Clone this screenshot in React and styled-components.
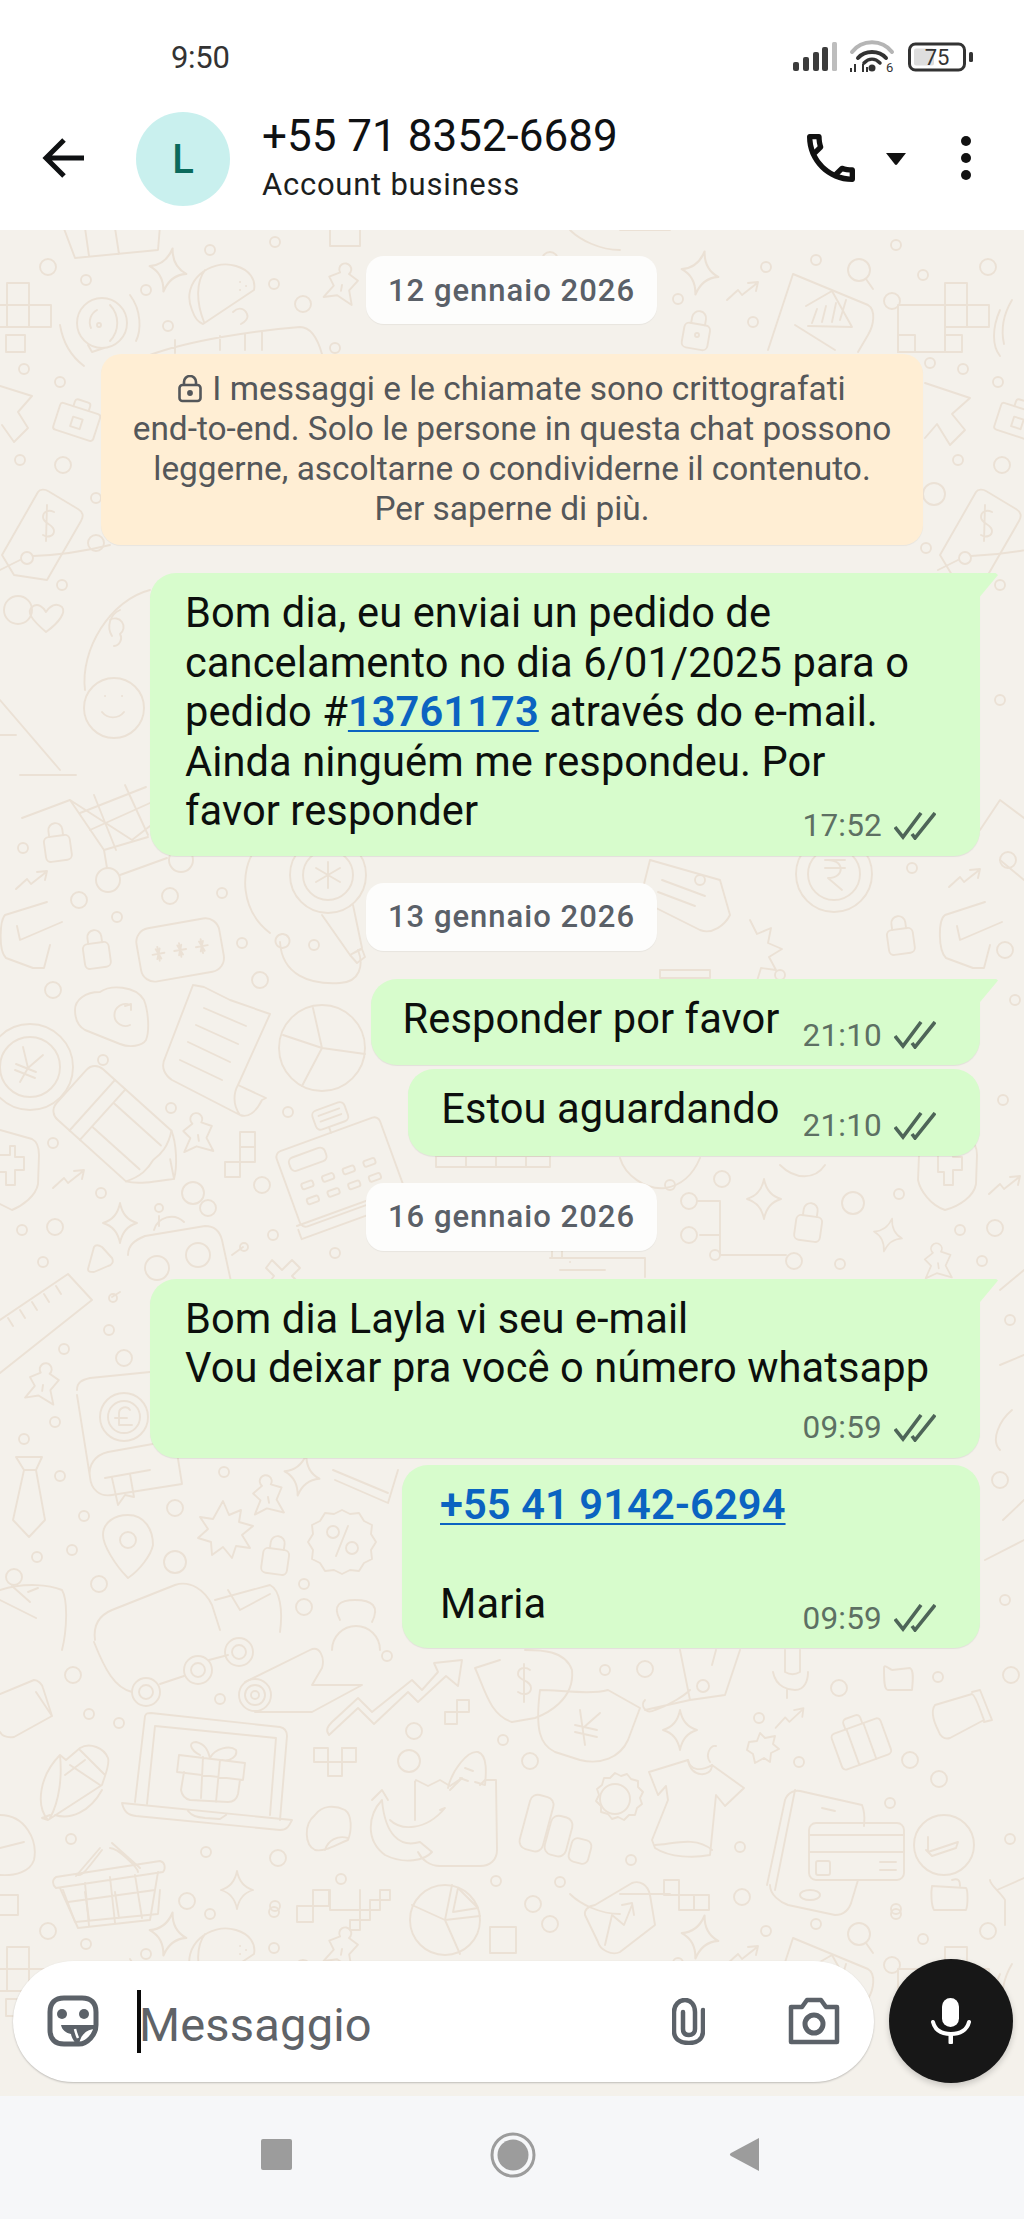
import React from 'react';
import styled, { createGlobalStyle } from 'styled-components';

const Global = createGlobalStyle`
  html, body { margin: 0; padding: 0; background: #fff; }
  * { box-sizing: border-box; }
`;

const Page = styled.div`
  width: 1024px; height: 2219px; display: flex; flex-direction: column;
  font-family: Roboto, "Liberation Sans", sans-serif; overflow: hidden; background: #fff;
`;
const StatusBar = styled.div`
  height: 80px; flex: none; display: flex; align-items: flex-start; justify-content: space-between;
  padding: 40px 50px 0 171px;
`;
const Clock = styled.span`font-size: 31px; line-height: 36px; color: #333; letter-spacing: -0.3px;`;
const StatusIcons = styled.svg`display: block; margin-top: 0; overflow: visible;`;
const Header = styled.header`
  height: 150px; flex: none; display: flex; align-items: center; padding: 0 0 0 42px; color: #0f1113;
`;
const BackIcon = styled.svg`flex: none; display: block; margin: 6px 52px 0 0;`;
const Avatar = styled.div`
  width: 94px; height: 94px; border-radius: 50%; background: #c9f0ee; color: #0b6a5c; flex: none;
  display: flex; align-items: center; justify-content: center; font-size: 40px; font-weight: 500; margin: 8px 32px 0 0;
`;
const Titles = styled.div`flex: 1; display: flex; flex-direction: column; gap: 5px; margin-top: 3px;`;
const Title = styled.div`font-size: 44px; line-height: 52px; letter-spacing: 0;`;
const Subtitle = styled.div`font-size: 31px; line-height: 36px; letter-spacing: 0.75px; color: #1c1e20;`;
const HeaderActions = styled.div`display: flex; align-items: center; margin: 6px 52px 0 0;`;
const ActionIcon = styled.svg`display: block; flex: none; margin-left: ${p => p.$ml || 0}px;`;

const Chat = styled.main`
  position: relative; flex: 1; display: flex; flex-direction: column; justify-content: space-between;
  background: #f4f1eb; overflow: hidden;
`;
const Wallpaper = styled.svg`position: absolute; left: 0; top: 0; display: block;`;
const Thread = styled.div`
  position: relative; display: flex; flex-direction: column; align-items: flex-end; padding: 26px 44px 0 0;
`;
const DateChip = styled.div`
  align-self: center; margin: ${p => p.$mt}px 0 0 -1px; width: 291px; height: 68px; border-radius: 18px; background: #fdfdfc;
  display: flex; align-items: center; justify-content: center; font-size: 31px; font-weight: 500; letter-spacing: 1px; color: #5a6068;
  transform: translateX(22px);
  box-shadow: 0 1px 1px rgba(0,0,0,.05);
`;
const Notice = styled.div`
  align-self: center; margin-top: 30px; width: 822px; height: 191px; border-radius: 20px; background: #ffeed4;
  padding-top: 15px; text-align: center; font-size: 33.4px; line-height: 40px; color: #54575a; transform: translateX(22px);
  box-shadow: 0 1px 1px rgba(0,0,0,.05);
`;
const NoticeLock = styled.svg`display: inline-block; vertical-align: -3px; margin-right: 10px;`;
const Bubble = styled.div`
  position: relative; width: ${p => p.$w}px; margin-top: ${p => p.$mt}px; padding: 15px 44px 12px ${p => p.$pl || 35}px;
  background: #d7fccc; border-radius: 26px;
  border-top-right-radius: ${p => p.$tail ? '3px' : '26px'};
  display: flex; flex-direction: ${p => p.$row ? 'row' : 'column'}; justify-content: flex-end;
  box-shadow: 0 1px 1px rgba(0,0,0,.07);
  ${p => p.$tail ? `&::after { content: ''; position: absolute; right: -18px; top: 0; width: 20px; height: 26px; background: #d7fccc;
    clip-path: polygon(0 0, 88% 0, 100% 8%, 0 100%); }` : ''}
`;
const Body = styled.div`
  font-size: 41.6px; line-height: 49.5px; color: #0c0f0d; white-space: nowrap; letter-spacing: 0.1px;
  ${p => p.$row ? 'margin-right: 23px; margin-bottom: 10px;' : ''}
`;
const Link = styled.span`color: #0b63c1; font-weight: 600; text-decoration: underline; text-decoration-thickness: 2px; text-underline-offset: 4px;`;
const Meta = styled.div`
  display: flex; align-items: center; justify-content: flex-end; gap: 12px; height: 36px; flex: none;
  margin-top: ${p => p.$mt || 0}px; align-self: flex-end;
  font-size: 31.5px; color: #5d7063; letter-spacing: 0.2px;
`;
const Ticks = styled.svg`display: block; flex: none;`;
const Composer = styled.div`
  position: relative; display: flex; align-items: center; gap: 15px; padding: 0 11px 13px 13px;
`;
const InputPill = styled.div`
  flex: 1; height: 121px; border-radius: 61px; background: #fff; display: flex; align-items: center; padding: 0 34px 0 34px;
  box-shadow: 0 1px 2px rgba(0,0,0,.22);
`;
const GrayIcon = styled.svg`display: block; flex: none; margin-left: ${p => p.$ml || 0}px;`;
const Caret = styled.span`width: 4px; height: 63px; background: #0a0a0a; margin-left: 38px; flex: none;`;
const Placeholder = styled.span`flex: 1; font-size: 47px; color: #5f6368; margin: 6px 0 0 -2px; letter-spacing: 0.2px;`;
const MicButton = styled.div`
  width: 124px; height: 124px; border-radius: 50%; background: #171717; flex: none; display: flex; align-items: center; justify-content: center;
  box-shadow: 0 3px 6px rgba(0,0,0,.18);
`;
const MicIcon = styled.svg`display: block;`;
const NavBar = styled.nav`
  height: 123px; flex: none; background: #f6f7f9; display: flex; align-items: center; padding: 0 0 6px 261px;
`;
const NavSquare = styled.span`width: 31px; height: 31px; background: #9c9c9c; border-radius: 2px; display: block;`;
const NavIcon = styled.svg`display: block; margin-left: ${p => p.$ml}px;`;

const At = ({ x, y, r = 0, s = 1, children }) => <g transform={`translate(${x} ${y}) rotate(${r}) scale(${s})`}>{children}</g>;
const Lock = p => <At {...p}><rect x="-13" y="-6" width="26" height="25" rx="5" /><path d="M-7 -6V-12a7 7 0 0 1 14 0V-6" /></At>;
const Sparkle = p => <At {...p}><path d="M0 -20Q3 -4 17 0Q3 4 0 20Q-3 4 -17 0Q-3 -4 0 -20Z" /></At>;
const Zig = p => <At {...p}><path d="M-16 9L-5 -1L-1 4L13 -7M5 -8L15 -9L13 0" /></At>;
const Apple = p => <At {...p}><path d="M-4 -12a6 6 0 1 1 9 0L15 -7L8 4L13 18L-3 11L-16 15L-8 2L-14 -6Z" /><path d="M0 0V6" /></At>;
const Cells = ({ x, y, c, r = 0, u = 22 }) => <At x={x} y={y} r={r}>{c.map(([a, b], i) => <rect key={i} x={a * u} y={b * u} width={u} height={u} />)}</At>;

const DOTS = [
  [73,1675,8],[220,1699,5],[89,1714,5],[119,1723,5],[387,1656,5],[414,1731,8],[503,1740,5],[409,1761,11],[71,1839,5],[206,1852,5],[278,1858,8],[187,1901,8],[274,1912,5],[341,1879,5],[496,1881,5],
  [605,1670,5],[645,1669,8],[839,1688,8],[938,1677,5],[1011,1675,8],[759,1718,5],[530,1761,8],[799,1762,5],[910,1760,8],[939,1779,8],[890,1803,5],[1010,1839,5],[740,1847,5],[631,1860,5],[560,1882,5],[742,1897,8],[533,1904,8],[896,1914,5],
  [24,369,5],[60,382,5],[20,460,5],[63,465,8],[96,498,5],[96,543,8],[62,585,5],[998,382,5],[930,363,5],[963,369,5],[958,460,5],[1002,465,8],[934,494,11],[926,548,5],[1000,585,5],
  [23,848,5],[79,900,8],[117,917,5],[170,896,8],[222,893,5],[242,943,5],[260,980,8],[314,945,5],[53,990,8],
  [103,1060,5],[171,1108,5],[288,1112,5],[53,1143,5],[101,1193,5],[193,1193,11],[262,1185,8],[208,1208,8],[22,1230,5],[55,1227,8],[273,1235,5],[43,1262,5],[335,1253,5],
  [109,1330,5],[64,1349,5],[124,1358,8],[55,1422,5],[24,1439,5],[60,1476,5],[224,1472,5],[84,1516,5],[72,1550,5],[37,1557,5],[175,1508,8],[175,1562,11],[99,1584,8],[304,1584,5],[304,1607,8],
  [722,1179,8],[853,1203,11],[899,1194,5],[995,1228,8],[960,1230,5],[840,1264,5],[982,1261,5],[689,1201,8],[689,1235,8],[794,1261,8],[670,1185,5],[715,1255,5],[1005,950,8],[780,975,5],[700,880,5],[912,868,5],[560,900,8],[1000,700,5],[1008,860,8],[1003,1100,5],[1010,1320,5],[1000,1480,8],[1005,1600,5],[1015,1000,5],
];
const TOP_DOTS = [[48,267,8],[86,280,5],[146,290,5],[210,250,5],[275,242,5],[274,284,5],[303,304,8],[168,326,5],[335,348,5],[896,245,5],[988,267,8],[923,275,5],[816,260,5],[766,267,5],[678,299,5],[892,301,8],[753,322,5],[597,305,5],[550,260,8]];

const TopBand = () => (
  <g>
    {TOP_DOTS.map(([x, y, r], i) => <circle key={i} cx={x} cy={y} r={r} />)}
    <path d="M63 226L75 258L158 250L160 226M85 228l4 28M115 228l4 26M330 226v20h30v-20" />
    <Sparkle x={168} y={270} r={12} s={1.1} />
    <path d="M192 310C180 282 210 258 236 266C250 270 256 280 254 290L203 324C197 322 194 316 192 310ZM205 270C196 282 196 302 204 322M240 282h.1M246 286h.1M240 290h.1" />
    <path d="M233 312c6-6 12-3 14 2c2 4-2 8-6 10" />
    <Cells x={7} y={283} c={[[0,0],[0,1],[1,1]]} />
    <rect x="6" y="335" width="19" height="17" />
    <path d="M0 305H7M0 327H7" />
    <circle cx="102" cy="323" r="25" />
    <path d="M88 345L92 352L104 348M110 305a26 26 0 0 1 0 36M97 310a14 14 0 0 0 -6 18M130 295c12 16 11 36 6 46M60 325c3 18 12 32 24 41" />
    <circle cx="99" cy="325" r="2" />
    <Apple x={342} y={285} r={10} />
    <path d="M150 355C190 340 260 330 300 327C312 327 318 340 322 354M175 353V340M220 350V336M245 350V334M262 350V332" />
    <Sparkle x={700} y={273} r={12} s={1.1} />
    <Zig x={743} y={291} s={1} />
    <Lock x={697} y={330} r={10} />
    <circle cx="697" cy="335" r="2" />
    <circle cx="859" cy="270" r="11" /><path d="M866 279L873 289" />
    <path d="M793 274L868 305C876 310 874 325 868 335L858 352M793 274L768 350" />
    <path d="M795 325L835 350M806 306L832 291L852 327L808 326M817 309L812 323M826 306L822 322M836 303L832 322M846 300L840 320" />
    <Cells x={945} y={283} c={[[0,0],[0,1],[1,1]]} u={22} />
    <rect x="898" y="305" width="47" height="47" /><rect x="898" y="335" width="17" height="17" /><rect x="945" y="335" width="17" height="17" />
    <path d="M1000 310c-8 18-8 36 0 46M1012 300c-6 10-12 26-8 44" />
    <path d="M570 230C580 240 600 250 620 250M620 230h50" />
  </g>
);

const Doodles = () => (
  <Wallpaper width="1024" height="1866" viewBox="0 230 1024 1866" fill="none" stroke="#ebe1d5" strokeWidth="1.9" strokeLinecap="round" strokeLinejoin="round">
    {DOTS.map(([x, y, r], i) => <circle key={i} cx={x} cy={y} r={r} />)}
    <TopBand />
    <g transform="translate(0 1664)"><TopBand /></g>

    <path d="M0 386L32 396L18 412L28 428L14 442L2 425" />
    <path d="M925 383L970 398L952 414L965 430L950 445L937 424L925 438" />
    <At x={77} y={421} r={18}><rect x="-21" y="-13" width="42" height="28" rx="3" /><path d="M-8 -13v-5a3 3 0 0 1 3-3h10a3 3 0 0 1 3 3v5" /><rect x="-5" y="-3" width="10" height="10" /></At>
    <At x={1018} y={421} r={18}><rect x="-21" y="-13" width="42" height="28" rx="3" /><path d="M-8 -13v-5a3 3 0 0 1 3-3h10a3 3 0 0 1 3 3v5" /><rect x="-5" y="-3" width="10" height="10" /></At>
    {[0, 938].map(dx => (
      <g key={dx} transform={`translate(${dx} 0)`}>
        <path d="M2 555L38 492C40 489 45 489 48 491L78 509C83 512 84 516 81 521L47 580L14 575Z" />
        <path d="M54 512c-6-3-11 0-11 5c0 7 11 7 11 14c0 5-6 7-11 4M47 505L46 541" />
        <circle cx="27" cy="558" r="6" />
        <path d="M0 570L20 560M33 556C60 555 90 550 110 545" />
      </g>
    ))}

    <path d="M46 632C32 620 26 612 32 607C38 602 44 608 46 612C50 606 56 602 62 607C66 612 60 622 46 632Z" />
    <circle cx="18" cy="610" r="14" />
    <path d="M85 690C80 650 110 600 150 590" />
    <circle cx="114" cy="708" r="30" /><path d="M102 712a14 14 0 0 0 22 0M105 696h.1M122 696h.1" />
    <path d="M120 610a18 18 0 0 0 -8 26M110 620a8 8 0 0 1 10 14a8 8 0 0 1 -6 12" />
    <path d="M0 700L60 770M20 775h56M0 735h16" />

    <path d="M22 818L70 800L132 840L150 826M70 800L104 850L148 837M80 813L146 787M90 830L150 803M94 795L116 850M125 785L148 835" />
    <path d="M104 850L107 868M120 875L167 858" />
    <circle cx="108" cy="880" r="12" />
    <circle cx="181" cy="860" r="12" />
    <Lock x={57} y={842} r={-8} />
    <Zig x={32} y={880} />
    <path d="M47 902L5 915C0 920 -2 950 6 958L33 968L44 968L50 945M62 922L20 940L17 926" />
    <Lock x={96} y={949} r={-8} />
    <At x={180} y={949} r={-10}><rect x="-42" y="-26" width="84" height="54" rx="14" /><path d="M-22 -6V8M-28 1H-16M-24 -4L-20 6M-20 -4L-24 6M0 -6V8M-6 1H6M-2 -4L2 6M2 -4L-2 6M22 -6V8M16 1H28M20 -4L24 6M24 -4L20 6" /></At>
    <path d="M270 933C240 910 240 870 255 850C262 840 280 835 290 830M282 934a7 7 0 1 0 1 0zM280 942C282 975 310 985 340 983C360 982 364 965 358 950" />
    <circle cx="328" cy="875" r="38" /><circle cx="328" cy="875" r="25" />
    <path d="M328 862V888M316 868L340 882M340 868L316 882" />
    <path d="M322 915L350 955L362 948L353 905M350 955l12 -6l3 8l-8 6z" />

    <circle cx="30" cy="1067" r="43" /><circle cx="30" cy="1067" r="30" />
    <path d="M23 1047L28 1068L20 1082M43 1055L28 1068M16 1064L36 1072M15 1070L35 1078" />
    <path d="M75 1010C75 1000 85 992 100 992C110 985 135 985 144 1000C148 1010 150 1030 146 1040C142 1046 130 1048 120 1044L85 1030C78 1026 75 1018 75 1010Z" />
    <path d="M130 1005a11 11 0 1 0 0 20M125 1006l6 -2l0 6" />
    <path d="M193 985L165 1058C160 1068 166 1076 172 1080L240 1115C248 1118 256 1112 262 1100L266 1098L238 1085C234 1092 232 1104 240 1115M193 985L204 987L230 1000L270 1014L238 1085" />
    <path d="M204 1008L246 1026M196 1025L238 1044M188 1042L230 1062M180 1060L222 1080" />
    <circle cx="322" cy="1048" r="43" /><path d="M313 1008L322 1048L365 1054M322 1048L302 1086M322 1048L283 1035" />

    <At x={122} y={1132} r={42}>
      <path d="M-68 -22C-68 -30 -62 -34 -56 -34L36 -34C48 -28 64 -12 70 0C60 12 48 28 36 34L-56 34C-62 34 -68 30 -68 22Z" />
      <path d="M-40 -34V34M-26 -34V34M-26 -16H38M-26 16H38M70 0L54 -12M36 -34C44 -20 44 -10 42 0C44 10 44 20 36 34" />
    </At>
    <path d="M0 1130L32 1139C38 1142 39 1148 39 1155L38 1184C36 1196 22 1206 12 1210L0 1204" />
    <path d="M0 1155H10V1146H15V1157H24V1170H15V1185H6V1172H0" />
    <Zig x={69} y={1179} />
    <Apple x={198} y={1135} r={-8} />
    <Cells x={240} y={1132} c={[[0,0],[0,1]]} u={15} /><rect x="225" y="1162" width="15" height="15" />
    <At x={330} y={1165} r={-20}>
      <rect x="-48" y="-30" width="110" height="80" rx="6" />
      <rect x="-38" y="-20" width="38" height="14" rx="5" />
      {[0,1,2,3].map(i => <rect key={i} x={-34 + i * 22} y={8} width="12" height="6" rx="2" />)}
      {[0,1,2,3].map(i => <rect key={i} x={-34 + i * 22} y={24} width="12" height="6" rx="2" />)}
      <path d="M-52 46L70 46M-52 50V60H70" />
      <rect x="0" y="-56" width="34" height="20" rx="5" /><path d="M6 -50H28M6 -44H28M12 -36V-30" />
    </At>

    <Sparkle x={120} y={1223} s={1} />
    <path d="M88 1269L94 1247C96 1244 99 1245 102 1247L112 1258C114 1262 112 1265 108 1266L94 1272C90 1272 88 1272 88 1269Z" />
    <path d="M154 1230a18 18 0 0 1 30 -8M128 1255C128 1245 135 1240 145 1236L205 1226C215 1226 220 1232 222 1240L235 1300" />
    <circle cx="157" cy="1268" r="12" /><circle cx="198" cy="1255" r="12" />
    <path d="M159 1226V1216" /><circle cx="159" cy="1208" r="4" />
    <path d="M232 1255L243 1247" /><circle cx="244" cy="1247" r="4" />
    <path d="M272 1260l10 10l10 -10l8 8l-8 8l8 8l-8 8l-8 -8l-8 8l-8 -8l6 -8l-8 -8z" />
    <path d="M120 1292L112 1297" /><circle cx="113" cy="1298" r="4" />

    <path d="M0 1320L68 1274L92 1300L0 1373M8 1318l5 8M20 1310l5 8M32 1302l5 8M44 1294l5 8M56 1286l5 8" />
    <Apple x={43} y={1385} r={8} />
    <path d="M77 1390C77 1382 82 1380 90 1378L150 1372M77 1395L90 1477C91 1490 100 1497 112 1495L182 1484L175 1440L108 1452C95 1455 88 1465 90 1477" />
    <circle cx="124" cy="1417" r="24" /><circle cx="124" cy="1417" r="16" />
    <path d="M130 1410a6 6 0 0 0 -11 3V1425H132M115 1418H127M105 1478L150 1470M112 1478L118 1505L125 1495L134 1497L130 1474" />
    <path d="M16 1457H42L36 1470L45 1520L29 1537L13 1520L24 1470ZM24 1470H36" />
    <path d="M128 1578C115 1565 103 1545 103 1535C103 1522 115 1515 128 1515C145 1515 153 1530 153 1545C151 1555 140 1570 128 1578Z" />
    <circle cx="128" cy="1540" r="8" />
    <path d="M223 1501l6 14l12 -5l-2 12l14 4l-11 9l8 13l-14 -2l-4 12l-9 -11l-11 8l-1 -13l-13 -4l10 -9l-8 -12l13 2z" />
    <Apple x={268} y={1497} r={-10} />
    <Sparkle x={302} y={1475} r={12} s={1.05} />
    <Lock x={276} y={1555} r={8} />
    <path d="M342 1510l8 4l9 -1l5 8l8 4l-1 9l5 8l-5 8l1 9l-8 4l-5 8l-9 -1l-8 4l-8 -4l-9 1l-5 -8l-8 -4l1 -9l-5 -8l5 -8l-1 -9l8 -4l5 -8l9 1z" />
    <path d="M348 1526L336 1556" /><circle cx="333" cy="1532" r="6" /><circle cx="352" cy="1548" r="6" />
    <path d="M335 1480L388 1503L398 1470M333 1470L388 1493" />

    <path d="M0 1590C25 1582 50 1585 62 1590C68 1600 67 1630 62 1650M0 1600L36 1618" />
    <circle cx="14" cy="1577" r="8" /><path d="M12 1586L30 1602M28 1592l10 -4" />
    <path d="M95 1640C93 1625 100 1615 112 1610L175 1585C190 1580 205 1590 212 1605L220 1630" />
    <path d="M215 1600L270 1585C280 1590 283 1610 280 1632M228 1590L240 1610L270 1594" />
    <path d="M340 1620C332 1605 340 1600 355 1600C372 1600 380 1606 372 1622M332 1650a24 24 0 0 1 48 0" />

    <path d="M0 1694L34 1680C38 1680 42 1684 43 1688L52 1716L14 1737C6 1738 2 1736 0 1732M36 1692L52 1716" />
    <circle cx="146" cy="1692" r="14" /><circle cx="146" cy="1692" r="7" />
    <circle cx="198" cy="1670" r="14" /><circle cx="198" cy="1670" r="7" />
    <circle cx="239" cy="1652" r="14" /><circle cx="239" cy="1652" r="7" />
    <path d="M94 1642C105 1670 115 1688 132 1692M160 1684L184 1676M209 1660L228 1655" />
    <circle cx="255" cy="1695" r="16" /><circle cx="255" cy="1695" r="10" /><circle cx="255" cy="1695" r="4" />
    <path d="M245 1682L310 1650C320 1645 325 1658 322 1668L312 1685H362L312 1712H255" />
    <path d="M329 1735C325 1730 328 1726 332 1722L358 1698L372 1712L412 1680L422 1690L438 1672L434 1663L462 1660L458 1686L446 1676L418 1702L408 1692L374 1724L358 1708Z" />
    <path d="M475 1668L500 1660M475 1668C485 1690 490 1715 512 1722" />
    <Cells x={445} y={1700} c={[[0,1],[1,0]]} u={12} />
    <Cells x={314} y={1748} c={[[0,0],[2,0],[1,1]]} u={14} />
    <path d="M342 1748h14" />

    <path d="M60 1755C40 1775 35 1805 48 1820L102 1785C105 1775 110 1765 108 1758C104 1748 90 1742 80 1748L66 1760ZM60 1755C62 1775 60 1800 50 1818M50 1815L42 1818L48 1820M55 1815C70 1820 90 1812 102 1790M70 1765L100 1785M80 1750L105 1775M65 1775L85 1760" />

    <path d="M135 1802L145 1716C146 1713 148 1713 151 1713L280 1727C285 1728 287 1732 287 1736L280 1820" />
    <path d="M155 1726L276 1738L270 1815M155 1726L147 1804" />
    <path d="M122 1803C124 1812 128 1815 136 1816L280 1830C288 1830 290 1824 292 1820L122 1803ZM188 1811C192 1816 196 1817 205 1818L220 1819L226 1815" />
    <path d="M179 1755L245 1763L243 1780L177 1772ZM184 1772L181 1790C182 1796 186 1799 190 1800L228 1802C234 1802 237 1798 238 1794L240 1780M203 1757L201 1798M220 1760L216 1802M200 1755C190 1750 188 1742 196 1742C205 1744 208 1750 210 1758C215 1748 230 1745 236 1750C238 1756 230 1762 222 1760" />

    <path d="M415 1782L416 1780L428 1786L440 1780L450 1786L462 1778L450 1790M480 1785L485 1780L496 1780L497 1850C497 1860 490 1866 480 1866H440C430 1866 422 1860 418 1852" />
    <path d="M448 1788C452 1770 468 1750 478 1752C488 1755 486 1775 485 1785L475 1782M465 1768l8 3M460 1778l8 3M415 1782V1820" />
    <path d="M382 1800C368 1815 365 1840 385 1855C405 1865 425 1860 432 1852L420 1842C400 1848 385 1835 382 1800ZM388 1800L382 1790L372 1800M390 1820C400 1830 425 1832 445 1808L440 1810" />
    <path d="M315 1815C322 1805 335 1805 345 1810C352 1815 352 1830 348 1840C335 1845 325 1852 315 1850C305 1845 303 1825 315 1815ZM325 1850C328 1840 338 1835 348 1838" />

    <path d="M56 1877L160 1861C165 1862 166 1868 163 1872L56 1888C52 1884 52 1880 56 1877ZM60 1888L78 1928L150 1920L158 1872M85 1883L89 1926M110 1877L115 1923M135 1875L142 1918M68 1902L155 1890" />
    <path d="M76 1876L100 1848M78 1875C82 1876 85 1872 102 1850M112 1843L140 1868M110 1848C118 1848 138 1868 138 1872" />
    <path d="M0 1815C25 1815 38 1840 34 1860C30 1872 15 1876 0 1875M0 1848L24 1842" />
    <Sparkle x={237} y={1890} s={0.95} />
    <Cells x={297} y={1890} c={[[0,1],[1,0]]} u={16} />
    <Cells x={350} y={1890} c={[[0,3],[1,2],[2,1],[3,0]]} u={10} />
    <path d="M0 1895H18V1915H0" />
    <circle cx="445" cy="1920" r="35" /><path d="M445 1920L452 1885M445 1920L460 1954M445 1920L412 1905M445 1920L480 1916M458 1888L478 1908L453 1912Z" />
    <Cells x={490} y={1927} c={[[0,0]]} u={26} />

    <path d="M512 1722L535 1718C546 1714 575 1700 572 1670C565 1650 540 1650 525 1650" />
    <path d="M530 1670c-5-4-12-2-12 4c0 7 13 6 13 14c0 6-7 8-13 4M524 1664V1702" />
    <path d="M540 1690C560 1690 590 1695 608 1690L640 1708L628 1740C620 1758 600 1765 580 1760L555 1752C540 1745 535 1730 540 1690Z" />
    <path d="M580 1710L585 1745M600 1713L583 1728M575 1725L597 1730M575 1732L597 1737" />
    <path d="M680 1650L690 1700L645 1710M740 1650L725 1695L690 1700M645 1700C640 1705 645 1715 655 1710C670 1705 685 1695 690 1690" />
    <circle cx="703" cy="1686" r="6" /><path d="M716 1650L712 1665" />
    <path d="M785 1650V1672a15 15 0 0 0 15 0V1650M773 1672C776 1688 790 1690 795 1690C805 1690 808 1680 808 1672M787 1690V1698" />
    <path d="M884 1668C884 1664 888 1668 892 1670L910 1668C914 1670 913 1680 912 1690H888C884 1690 884 1680 884 1668Z" />
    <path d="M935 1705L972 1694C976 1696 980 1710 984 1720L950 1738C944 1740 940 1736 938 1730C934 1722 930 1712 935 1705ZM972 1692L980 1690L992 1720L984 1722" />
    <Zig x={790} y={1718} r={-5} s={0.95} />
    <Sparkle x={680} y={1730} s={1} />
    <At x={861} y={1743} r={-20}><rect x="-26" y="-18" width="52" height="38" rx="4" /><path d="M-10 -18v-6a4 4 0 0 1 4-4h10a4 4 0 0 1 4 4v6M-9 -18V20M9 -18V20" /></At>
    <path d="M749 1742l8 -1l3 -8l5 5l10 -2l-2 8l6 5l-8 4l-1 9l-6 -4l-9 5l-2 -9l-6 -4z" />

    <circle cx="615" cy="1799" r="15" />
    <path d="M615 1773l6 3l6 -2l4 5l7 2l0 6l5 5l-3 6l2 6l-5 4l-2 7l-6 0l-5 5l-6 -3l-6 2l-4 -5l-7 -2l0 -6l-5 -5l3 -6l-2 -6l5 -4l2 -7l6 0z" />
    <At x={536} y={1825} r={15}><rect x="-12" y="-30" width="24" height="56" rx="8" /></At>
    <At x={558} y={1838} r={15}><rect x="-11" y="-22" width="22" height="40" rx="8" /></At>
    <At x={580} y={1851} r={15}><rect x="-10" y="-12" width="20" height="24" rx="6" /></At>
    <path d="M649 1772L688 1760C690 1770 700 1772 712 1765L744 1788L725 1806L716 1795L710 1855C695 1858 670 1858 655 1848L652 1840L668 1800L666 1786L658 1795Z" />
    <path d="M688 1760C690 1778 712 1778 712 1765M710 1762C705 1755 710 1745 716 1746M655 1845C670 1845 695 1835 712 1850" />
    <path d="M767 1885L785 1800C788 1792 795 1790 800 1791L862 1805C866 1815 864 1822 864 1826M770 1885C770 1895 780 1902 788 1905L835 1915C845 1915 850 1908 852 1900L858 1880M775 1890L795 1790" />
    <path d="M822 1808L835 1811" /><ellipse cx="810" cy="1895" rx="10" ry="5" />
    <rect x="809" y="1823" width="95" height="57" rx="7" />
    <path d="M809 1835H904M809 1852H904M880 1862H896M880 1870H896" />
    <rect x="816" y="1861" width="14" height="14" rx="2" />
    <circle cx="944" cy="1845" r="30" /><path d="M928 1837V1852L958 1842L956 1848L932 1856L926 1850" />
    <path d="M997 1890L1024 1878M990 1880C990 1885 1000 1892 1005 1900V1925" />
    <Cells x={664} y={1880} c={[[0,0],[1,1],[2,1]]} u={15} />
    <path d="M595 1905L632 1883C640 1880 648 1885 650 1895L655 1925L620 1952C612 1956 600 1950 598 1942L585 1915C584 1910 588 1906 595 1905ZM605 1945L612 1915L624 1925L632 1905M622 1905L632 1903L634 1915" />
    <path d="M932 1886L966 1888C968 1890 968 1905 966 1910H934C931 1905 931 1892 932 1886Z" />
    <path d="M952 1880C958 1878 960 1880 960 1886" />

    <circle cx="834" cy="874" r="38" /><circle cx="834" cy="874" r="26" />
    <path d="M825 860H845M825 868H845M828 860C845 860 845 878 828 878L842 890" />
    <path d="M750 920l7 14l14 -6l-3 15l14 6l-13 8l7 13l-15 -2l-4 13" />
    <path d="M720 880L650 860L640 900L700 930C712 935 725 925 730 915Z" />
    <path d="M662 880L705 896M658 892L695 906" />
    <Lock x={900} y={935} r={-8} />
    <path d="M985 902L945 915C938 920 938 950 946 958L973 968L984 968L990 945M1002 922L960 940L957 926" />
    <path d="M1024 818L1000 800L980 830M1024 880L1000 860" />
    <Zig x={965} y={878} />
    <rect x="660" y="970" width="50" height="8" />

    <path d="M920 1130L968 1139C975 1142 977 1148 977 1155L976 1184C974 1196 960 1206 945 1210C930 1205 920 1190 918 1180Z" />
    <path d="M938 1155H948V1146H953V1157H962V1170H953V1185H944V1172H938Z" />
    <Sparkle x={764} y={1199} s={1} />
    <Sparkle x={888} y={1235} r={14} s={0.85} />
    <Lock x={809} y={1222} r={8} />
    <Apple x={938} y={1263} r={-8} s={0.9} />
    <path d="M697 1201H720V1235H700M720 1235V1255H786" />
    <path d="M436 1156H550V1167H436ZM466 1156V1167M496 1156V1167M526 1156V1167" />
    <path d="M620 1158C625 1175 645 1190 665 1188C685 1185 695 1170 700 1158M780 1165C795 1180 815 1180 825 1165" />
    <path d="M550 1258H645V1277M560 1270H605M552 1248l10 0l0 10l-10 0zM570 1262h.1M585 1250h10" />
    <Zig x={1005} y={1185} />
    <path d="M1024 1270L1000 1290M1024 1355L1000 1365" />
    <path d="M1012 1410C1000 1420 990 1440 1000 1450M1024 1500L1003 1520M985 1560L1024 1540" />
  </Wallpaper>
);

const DoubleTick = () => (
  <Ticks width="42" height="28" viewBox="0 0 42 28" fill="none" stroke="#4e6558" strokeWidth="3.6">
    <path d="M1 15L9 25L27 1" />
    <path d="M18 22L21 26L41 1" />
  </Ticks>
);
const Stamp = ({ t, mt }) => <Meta $mt={mt}>{t}<DoubleTick /></Meta>;

export default function App() {
  return (
    <Page>
      <Global />
      <StatusBar>
        <Clock>9:50</Clock>
        <StatusIcons width="181" height="36" viewBox="793 40 181 36">
          <g fill="#3c3c3c">
            <rect x="793" y="62" width="6" height="9" rx="2" />
            <rect x="803" y="57" width="6" height="14" rx="2" />
            <rect x="813" y="52" width="6" height="19" rx="2" />
            <rect x="822" y="47" width="6" height="24" rx="2" />
          </g>
          <rect x="832" y="42" width="5" height="29" rx="1.5" fill="#bdbdbd" />
          <g fill="none" strokeLinecap="round">
            <path d="M852 52C862 39 882 39 892 52" stroke="#b5b5b5" strokeWidth="4" />
            <path d="M858 58C865 50 879 50 886 58" stroke="#333" strokeWidth="4" />
            <path d="M864 63C869 58 875 58 880 63" stroke="#333" strokeWidth="3.5" />
          </g>
          <circle cx="872" cy="68" r="3.5" fill="#333" />
          <path d="M851 68V72M855 64V72M863 64V72M867 67V72" stroke="#333" strokeWidth="2" />
          <text x="886" y="72" fontFamily="Roboto, sans-serif" fontSize="13" fill="#333">6</text>
          <rect x="909.5" y="44" width="55" height="26" rx="6" fill="none" stroke="#333" strokeWidth="3" />
          <rect x="914" y="48.5" width="20" height="17" rx="2" fill="#dedede" />
          <rect x="969" y="52" width="4" height="10" rx="1.5" fill="#333" />
          <text x="937" y="65" textAnchor="middle" fontFamily="Roboto, sans-serif" fontSize="22" fill="#333">75</text>
        </StatusIcons>
      </StatusBar>

      <Header>
        <BackIcon width="42" height="42" viewBox="0 0 42 42" fill="none" stroke="#0f1113" strokeWidth="5">
          <path d="M42 21H4M22 3L4 21L22 39" />
        </BackIcon>
        <Avatar>L</Avatar>
        <Titles>
          <Title>+55 71 8352-6689</Title>
          <Subtitle>Account business</Subtitle>
        </Titles>
        <HeaderActions>
          <ActionIcon width="48" height="48" viewBox="3 3 18 18" fill="#111">
            <path d="M6.54 5c.06.89.21 1.76.45 2.59l-1.2 1.2c-.41-1.2-.67-2.47-.76-3.79h1.51m9.86 12.02c.85.24 1.72.39 2.6.45v1.49c-1.32-.09-2.59-.35-3.8-.75l1.2-1.19M7.5 3H4c-.55 0-1 .45-1 1 0 9.39 7.61 17 17 17 .55 0 1-.45 1-1v-3.49c0-.55-.45-1-1-1-1.24 0-2.45-.2-3.57-.57-.1-.04-.21-.05-.31-.05-.26 0-.51.1-.71.29l-2.2 2.2c-2.83-1.45-5.15-3.76-6.59-6.59l2.2-2.2c.28-.28.36-.67.25-1.02C8.7 6.45 8.5 5.25 8.5 4c0-.55-.45-1-1-1z" />
          </ActionIcon>
          <ActionIcon $ml={30} width="22" height="13" viewBox="0 0 22 13" fill="#111"><path d="M1 1H21L12 12.5C11.5 13 10.5 13 10 12.5Z" /></ActionIcon>
          <ActionIcon $ml={53} width="12" height="46" viewBox="0 0 12 46" fill="#111">
            <circle cx="6" cy="6" r="5" /><circle cx="6" cy="23" r="5" /><circle cx="6" cy="40" r="5" />
          </ActionIcon>
        </HeaderActions>
      </Header>

      <Chat>
        <Doodles />
        <Thread>
          <DateChip $mt={0}>12 gennaio 2026</DateChip>
          <Notice>
            <NoticeLock width="24" height="28" viewBox="0 0 24 28" fill="none" stroke="#54575a" strokeWidth="2.6">
              <rect x="1.5" y="10" width="21" height="16" rx="3" />
              <path d="M6 10V7a6 6 0 0 1 12 0v3" />
              <circle cx="12" cy="18" r="1.6" fill="#54575a" />
            </NoticeLock>
            I messaggi e le chiamate sono crittografati<br />
            end-to-end. Solo le persone in questa chat possono<br />
            leggerne, ascoltarne o condividerne il contenuto.<br />
            Per saperne di più.
          </Notice>
          <Bubble $w={830} $mt={28} $tail>
            <Body>
              Bom dia, eu enviai un pedido de<br />
              cancelamento no dia 6/01/2025 para o<br />
              pedido #<Link>13761173</Link> através do e-mail.<br />
              Ainda ninguém me respondeu. Por<br />
              favor responder
            </Body>
            <Stamp t="17:52" mt={-28} />
          </Bubble>
          <DateChip $mt={27}>13 gennaio 2026</DateChip>
          <Bubble $w={609} $mt={28} $row $tail>
            <Body $row>Responder por favor</Body>
            <Stamp t="21:10" />
          </Bubble>
          <Bubble $w={572} $mt={4} $row>
            <Body $row>Estou aguardando</Body>
            <Stamp t="21:10" />
          </Bubble>
          <DateChip $mt={27}>16 gennaio 2026</DateChip>
          <Bubble $w={830} $mt={28} $tail>
            <Body>
              Bom dia Layla vi seu e-mail<br />
              Vou deixar pra você o número whatsapp
            </Body>
            <Stamp t="09:59" mt={17} />
          </Bubble>
          <Bubble $w={578} $mt={7} $pl={38}>
            <Body>
              <Link>+55 41 9142-6294</Link><br />
              <br />
              Maria
            </Body>
            <Stamp t="09:59" mt={-28} />
          </Bubble>
        </Thread>

        <Composer>
          <InputPill>
            <GrayIcon width="52" height="52" viewBox="0 0 52 52" fill="none" stroke="#5c6269" strokeWidth="5">
              <path d="M17 49H32C40 49 49 40 49 30V17C49 8 44 3 35 3H17C8 3 3 8 3 17V35C3 44 8 49 17 49Z" />
              <circle cx="15" cy="19" r="5" fill="#5c6269" stroke="none" />
              <circle cx="37" cy="19" r="5" fill="#5c6269" stroke="none" />
              <path d="M14 30H50L49 34C40 34 34 39 32 49H29C26 45 24 41 24 39C19 38 15 35 14 30Z" fill="#5c6269" stroke="none" />
              <path d="M28 34C29 38 30 41 31 43" stroke="#fff" strokeWidth="2.5" />
            </GrayIcon>
            <Caret />
            <Placeholder>Messaggio</Placeholder>
            <GrayIcon width="33" height="47" viewBox="0 0 33 47" fill="none" stroke="#5c6269" strokeWidth="4.5" strokeLinecap="round">
              <path d="M31 12V33C31 41 25 45 17 45C8 45 2 41 2 33V14C2 7 7 2 13 2C19 2 23 7 23 14V31C23 35 20 37 17 37C13 37 11 35 11 31V14" />
            </GrayIcon>
            <GrayIcon $ml={83} width="52" height="48" viewBox="0 0 52 48" fill="none" stroke="#5c6269" strokeWidth="4.5" strokeLinejoin="round">
              <path d="M3 10H14L19 3H33L38 10H49V45H3Z" />
              <circle cx="26" cy="27" r="9" strokeWidth="5" />
            </GrayIcon>
          </InputPill>
          <MicButton>
            <MicIcon width="40" height="46" viewBox="0 0 40 46" fill="#fff">
              <rect x="11" y="0" width="17" height="29" rx="8.5" />
              <path d="M2 24C4 32 10 36 20 36C29 36 36 32 38 24" fill="none" stroke="#fff" strokeWidth="4" strokeLinecap="round" />
              <rect x="17.5" y="34" width="4.5" height="12" rx="1" />
            </MicIcon>
          </MicButton>
        </Composer>
      </Chat>

      <NavBar>
        <NavSquare />
        <NavIcon $ml={198} width="46" height="46" viewBox="0 0 46 46">
          <circle cx="23" cy="23" r="21" fill="none" stroke="#9c9c9c" strokeWidth="3" />
          <circle cx="23" cy="23" r="15.5" fill="#9c9c9c" />
        </NavIcon>
        <NavIcon $ml={193} width="31" height="35" viewBox="0 0 31 35">
          <path d="M30 1V34L2 19C0.5 18 0.5 17 2 16Z" fill="#9c9c9c" />
        </NavIcon>
      </NavBar>
    </Page>
  );
}
